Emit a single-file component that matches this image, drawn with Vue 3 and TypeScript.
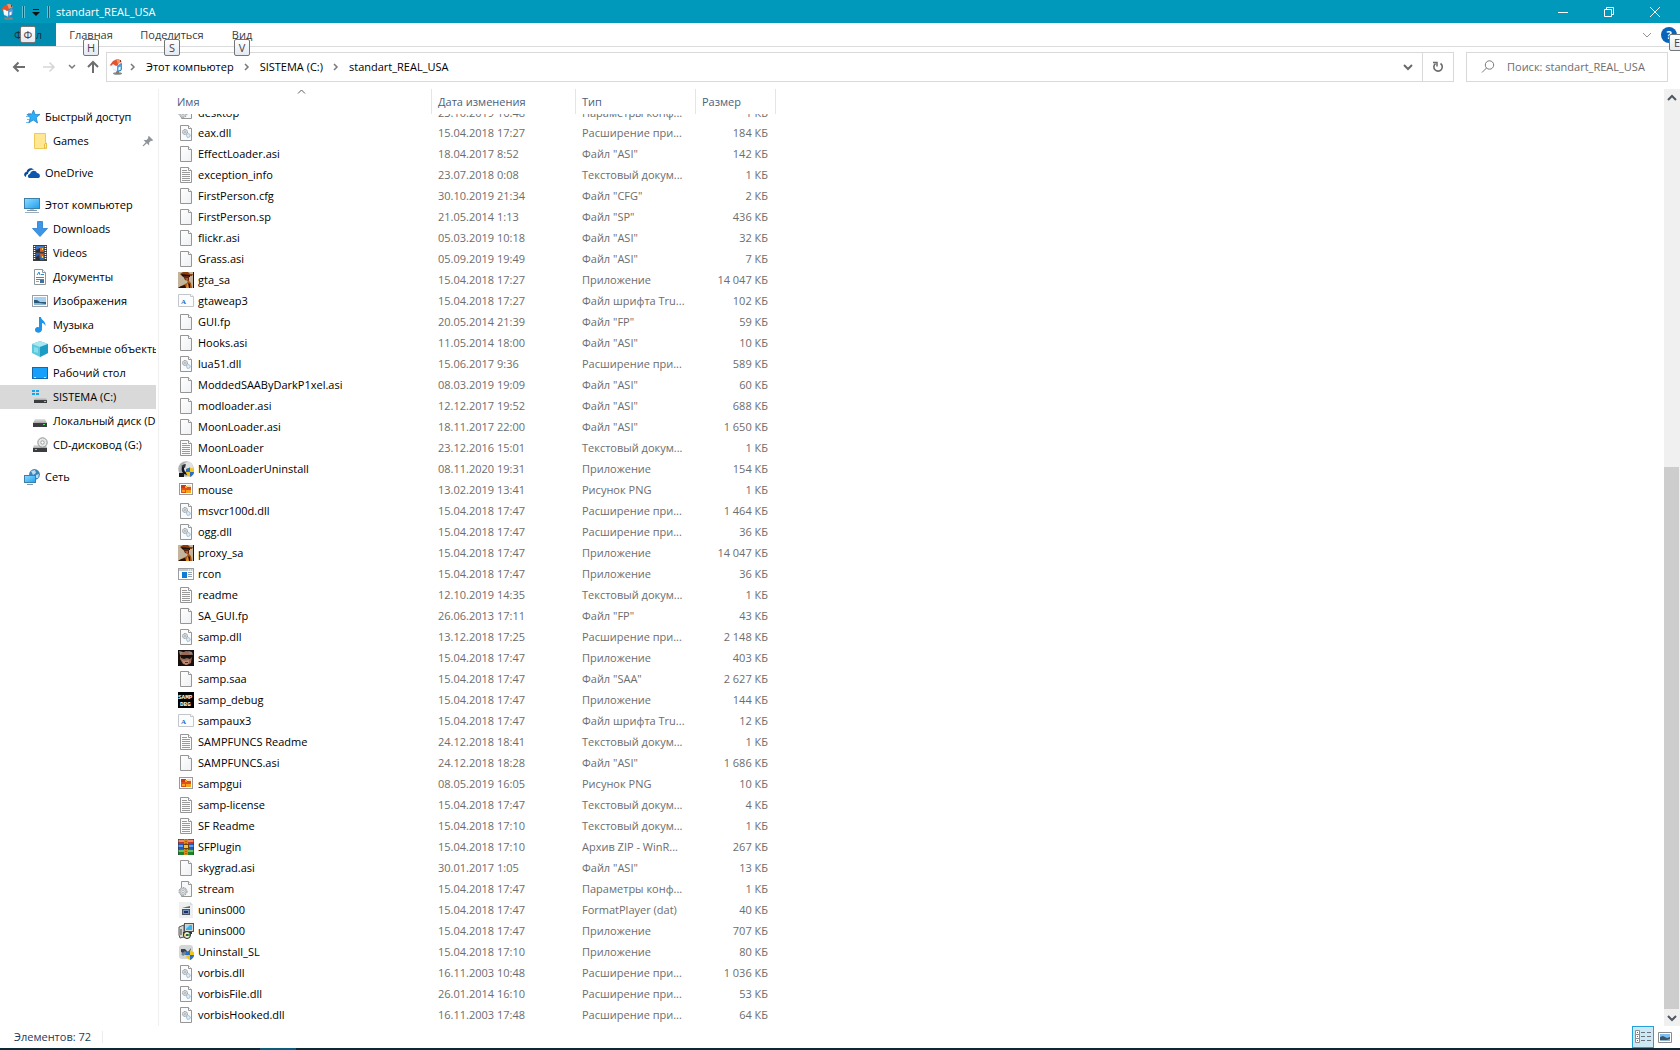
<script setup lang="ts">
interface FileRow {
  name: string
  icon: string
  date: string
  type: string
  size: string
}

interface NavItem {
  label: string
  icon: string
  root?: boolean
  pinned?: boolean
  current?: boolean
}

const DLL = 'Расширение при...'
const TXT = 'Текстовый докум...'
const APP = 'Приложение'
const FONT = 'Файл шрифта Tru...'

const raw: [string, string, string, string, string][] = [
  ['desktop', 'ini', '23.10.2019 16:48', 'Параметры конф...', '1'],
  ['eax.dll', 'dll', '15.04.2018 17:27', DLL, '184'],
  ['EffectLoader.asi', 'doc', '18.04.2017 8:52', 'Файл "ASI"', '142'],
  ['exception_info', 'txt', '23.07.2018 0:08', TXT, '1'],
  ['FirstPerson.cfg', 'doc', '30.10.2019 21:34', 'Файл "CFG"', '2'],
  ['FirstPerson.sp', 'doc', '21.05.2014 1:13', 'Файл "SP"', '436'],
  ['flickr.asi', 'doc', '05.03.2019 10:18', 'Файл "ASI"', '32'],
  ['Grass.asi', 'doc', '05.09.2019 19:49', 'Файл "ASI"', '7'],
  ['gta_sa', 'gta', '15.04.2018 17:27', APP, '14 047'],
  ['gtaweap3', 'font', '15.04.2018 17:27', FONT, '102'],
  ['GUI.fp', 'doc', '20.05.2014 21:39', 'Файл "FP"', '59'],
  ['Hooks.asi', 'doc', '11.05.2014 18:00', 'Файл "ASI"', '10'],
  ['lua51.dll', 'dll', '15.06.2017 9:36', DLL, '589'],
  ['ModdedSAAByDarkP1xel.asi', 'doc', '08.03.2019 19:09', 'Файл "ASI"', '60'],
  ['modloader.asi', 'doc', '12.12.2017 19:52', 'Файл "ASI"', '688'],
  ['MoonLoader.asi', 'doc', '18.11.2017 22:00', 'Файл "ASI"', '1 650'],
  ['MoonLoader', 'txt', '23.12.2016 15:01', TXT, '1'],
  ['MoonLoaderUninstall', 'moon', '08.11.2020 19:31', APP, '154'],
  ['mouse', 'png', '13.02.2019 13:41', 'Рисунок PNG', '1'],
  ['msvcr100d.dll', 'dll', '15.04.2018 17:47', DLL, '1 464'],
  ['ogg.dll', 'dll', '15.04.2018 17:47', DLL, '36'],
  ['proxy_sa', 'gta', '15.04.2018 17:47', APP, '14 047'],
  ['rcon', 'exe', '15.04.2018 17:47', APP, '36'],
  ['readme', 'txt', '12.10.2019 14:35', TXT, '1'],
  ['SA_GUI.fp', 'doc', '26.06.2013 17:11', 'Файл "FP"', '43'],
  ['samp.dll', 'dll', '13.12.2018 17:25', DLL, '2 148'],
  ['samp', 'samp', '15.04.2018 17:47', APP, '403'],
  ['samp.saa', 'doc', '15.04.2018 17:47', 'Файл "SAA"', '2 627'],
  ['samp_debug', 'debug', '15.04.2018 17:47', APP, '144'],
  ['sampaux3', 'font', '15.04.2018 17:47', FONT, '12'],
  ['SAMPFUNCS Readme', 'txt', '24.12.2018 18:41', TXT, '1'],
  ['SAMPFUNCS.asi', 'doc', '24.12.2018 18:28', 'Файл "ASI"', '1 686'],
  ['sampgui', 'png', '08.05.2019 16:05', 'Рисунок PNG', '10'],
  ['samp-license', 'txt', '15.04.2018 17:47', TXT, '4'],
  ['SF Readme', 'txt', '15.04.2018 17:10', TXT, '1'],
  ['SFPlugin', 'zip', '15.04.2018 17:10', 'Архив ZIP - WinR...', '267'],
  ['skygrad.asi', 'doc', '30.01.2017 1:05', 'Файл "ASI"', '13'],
  ['stream', 'ini', '15.04.2018 17:47', 'Параметры конф...', '1'],
  ['unins000', 'dat', '15.04.2018 17:47', 'FormatPlayer (dat)', '40'],
  ['unins000', 'setup', '15.04.2018 17:47', APP, '707'],
  ['Uninstall_SL', 'unsl', '15.04.2018 17:10', APP, '80'],
  ['vorbis.dll', 'dll', '16.11.2003 10:48', DLL, '1 036'],
  ['vorbisFile.dll', 'dll', '26.01.2014 16:10', DLL, '53'],
  ['vorbisHooked.dll', 'dll', '16.11.2003 17:48', DLL, '64'],
]

const files: FileRow[] = raw.map(([name, icon, date, type, size]) => ({
  name, icon, date, type, size: `${size} КБ`,
}))

const groups: NavItem[][] = [
  [
    { label: 'Быстрый доступ', icon: 'star', root: true },
    { label: 'Games', icon: 'folder', pinned: true },
  ],
  [{ label: 'OneDrive', icon: 'cloud', root: true }],
  [
    { label: 'Этот компьютер', icon: 'pc', root: true },
    { label: 'Downloads', icon: 'down' },
    { label: 'Videos', icon: 'video' },
    { label: 'Документы', icon: 'docs' },
    { label: 'Изображения', icon: 'pics' },
    { label: 'Музыка', icon: 'music' },
    { label: 'Объемные объекты', icon: 'cube' },
    { label: 'Рабочий стол', icon: 'desk' },
    { label: 'SISTEMA (C:)', icon: 'sysdrive', current: true },
    { label: 'Локальный диск (D:)', icon: 'drive' },
    { label: 'CD-дисковод (G:)', icon: 'cd' },
  ],
  [{ label: 'Сеть', icon: 'net', root: true }],
]

const tabs = [
  { label: 'Главная', key: 'H', cls: 'tab-home' },
  { label: 'Поделиться', key: 'S', cls: 'tab-share' },
  { label: 'Вид', key: 'V', cls: 'tab-view' },
]

const crumbs = ['Этот компьютер', 'SISTEMA (C:)', 'standart_REAL_USA']
</script>

<template>
  <div class="app">
    <svg class="paints" aria-hidden="true">
      <defs>
        <linearGradient id="g-page" x1="0" y1="0" x2="1" y2="1">
          <stop offset="0" stop-color="#ffffff" /><stop offset="1" stop-color="#eef0f2" />
        </linearGradient>
        <linearGradient id="g-screen" x1="0" y1="0" x2="1" y2="1">
          <stop offset="0" stop-color="#8fdcff" /><stop offset="1" stop-color="#1d9ff0" />
        </linearGradient>
        <linearGradient id="g-drive" x1="0" y1="0" x2="0" y2="1">
          <stop offset="0" stop-color="#e4e4e4" /><stop offset="1" stop-color="#a8a8a8" />
        </linearGradient>
      </defs>
    </svg>
    <svg class="defs" aria-hidden="true">
      <symbol id="i-house" viewBox="0 0 16 16">
        <ellipse cx="8.500" cy="14.500" rx="4.500" ry="1.300" fill="#7d8a90" />
        <rect x="7" y="11" width="3" height="4" fill="#8e7a64" />
        <path d="M3 5l6 2v6l-5-2z" fill="#d4ecfb" />
        <path d="M8 7l5-3v6l-1 2-4 1z" fill="#2f7fc4" />
        <path d="M8 7l4-3 1 3-1 4-4 1z" fill="#4f9edb" />
        <path d="M4 6l4 1v4l-4-1z" fill="#f4fbff" />
        <path d="M9.500 8.500l2-1v3l-2 1z" fill="#fff" />
        <path d="M1 6l3-4 4-2 2 3-1 3-2 1-3-2-2 2z" fill="#e2542a" />
        <path d="M7 0h3l3 3-4 2z" fill="#f5936a" />
        <rect x="11" y="1" width="1" height="2" fill="#8d3a20" />
      </symbol>
      <symbol id="i-doc" viewBox="0 0 16 16">
        <path d="M2.500.500h8l3 3v12h-11z" fill="url(#g-page)" stroke="#969696" />
        <path d="M10.500.500v3h3" fill="#fff" stroke="#969696" />
      </symbol>
      <symbol id="i-txt" viewBox="0 0 16 16">
        <path d="M2.500.500h8l3 3v12h-11z" fill="#fcfcfc" stroke="#969696" />
        <path d="M10.500.500v3h3" fill="#fff" stroke="#969696" />
        <path d="M4 3.500h5M4 5.500h8M4 7.500h8M4 9.500h8M4 11.500h8M4 13.500h8" stroke="#9a9a9a" />
      </symbol>
      <symbol id="i-dll" viewBox="0 0 16 16">
        <path d="M2.500.500h8l3 3v12h-11z" fill="#fafbfc" stroke="#969696" />
        <path d="M10.500.500v3h3" fill="#fff" stroke="#969696" />
        <circle cx="7" cy="7" r="2.500" fill="#e4e6e8" stroke="#858c92" stroke-dasharray="1.200 .5" />
        <circle cx="7" cy="7" r="1" fill="#fff" stroke="#858c92" stroke-width=".6" />
        <circle cx="10.300" cy="10.500" r="1.900" fill="#dcebf6" stroke="#7fa9c9" stroke-dasharray="1 .5" />
      </symbol>
      <symbol id="i-ini" viewBox="0 0 16 16">
        <path d="M3.500.500h7l3 3v12h-10z" fill="#f7f8f9" stroke="#969696" />
        <path d="M10.500.500v3h3" fill="#fff" stroke="#969696" />
        <circle cx="5" cy="10.500" r="4" fill="#e2e4e6" stroke="#8e9296" stroke-dasharray="1.600 1" />
        <circle cx="5" cy="10.500" r="3" fill="#e2e4e6" stroke="#9ea2a6" stroke-width=".7" />
        <circle cx="5" cy="10.500" r="1.200" fill="#fff" stroke="#8e9296" stroke-width=".6" />
      </symbol>
      <symbol id="i-gta" viewBox="0 0 16 16">
        <rect width="16" height="16" fill="#c4b49c" />
        <rect x="15" width="1" height="16" fill="#1a1210" />
        <path d="M5 0h5l2 2 3 0-1 2H4L2 2z" fill="#8d3d0c" />
        <path d="M3 2l9 1v2H5z" fill="#20100a" />
        <path d="M5 4h6v5l-4-1z" fill="#5a2412" />
        <path d="M7 6h3v2l-2 0z" fill="#b0562c" />
        <path d="M3 16l2-3 4-2 1-3 3 3 1 5z" fill="#a5530f" />
        <path d="M8 16l1-4 2-1 0 5z" fill="#e08a30" />
        <path d="M0 16l3-2 4-1 1 3zM10 11l2 1 0 4h-1z" fill="#2a0e08" />
      </symbol>
      <symbol id="i-font" viewBox="0 0 16 16">
        <path d="M.500 1.500h12l3 2v10H.500z" fill="#fbfcfd" stroke="#c3c7ca" />
        <path d="M12.500 1.500v2h3" fill="#fff" stroke="#c3c7ca" />
        <text x="3" y="11" font-size="7" font-weight="700" fill="#1a6bc0" font-family="Liberation Serif, serif">A</text>
      </symbol>
      <symbol id="i-shield" viewBox="0 0 16 16">
        <path d="M8 8l4-1.500L16 8v3c0 2.500-2 4-4 5-2-1-4-2.500-4-5z" fill="#f5c518" />
        <path d="M8 8l4-1.500V11H8zM12 11h4c0 2.500-2 4-4 5z" fill="#2b6fc4" />
      </symbol>
      <symbol id="i-moon" viewBox="0 0 16 16">
        <circle cx="8" cy="8" r="7.800" fill="#aeb2b3" />
        <circle cx="10" cy="6" r="5" fill="#e0e2e2" />
        <path d="M7 3C3 4 3 10 5 12H1l0 4h5v-3l3 1 1-2C6 12 5 7 7 3z" fill="#15181a" />
        <path d="M3 5l5-2-1 4z" fill="#33383b" />
        <use href="#i-shield" width="16" height="16" />
      </symbol>
      <symbol id="i-png" viewBox="0 0 16 16">
        <rect x="1.500" y="1.500" width="13" height="11" fill="#fff" stroke="#9a9a9a" />
        <path d="M3 3h5v1h5v7H3z" fill="#e0501e" />
        <path d="M3 3h5v3H3z" fill="#c83c14" />
        <path d="M7 4h2v2H7zM8 8h5v3H8zM4 8h3v2H4z" fill="#f6a21c" />
        <path d="M9 3h4v2H9z" fill="#f8d9b0" />
      </symbol>
      <symbol id="i-exe" viewBox="0 0 16 16">
        <rect x=".5" y="2.500" width="15" height="11" fill="#fff" stroke="#9a9fa4" />
        <path d="M1 3h14v2H1z" fill="#c3c8cc" />
        <path d="M10 4h1M12 4h1M14 4h1" stroke="#fff" />
        <rect x="4" y="6" width="5" height="6" fill="#0a7bd8" />
        <path d="M10 6.500h4M10 8.500h4M10 10.500h4" stroke="#8fa0b0" />
      </symbol>
      <symbol id="i-samp" viewBox="0 0 16 16">
        <rect width="16" height="16" fill="#15100e" />
        <path d="M2 2h4l2-1 5 1 1 4-1 7-4 2-4-1-3-5z" fill="#9a6a56" />
        <path d="M4 10l3 1 4-1 0 3-3 2-3-2z" fill="#c28a70" />
        <path d="M2 5h12v2l-2 2-3-1-3 1-3-1z" fill="#16100f" />
        <path d="M1 1l4 1-3 3zM10 1l4 1 1 3-3-1z" fill="#8e8a80" />
        <path d="M7 12h3v1H7z" fill="#5a2a24" />
      </symbol>
      <symbol id="i-debug" viewBox="0 0 16 16">
        <rect width="16" height="16" fill="#000" />
        <text x="0" y="7" font-size="6" font-weight="700" fill="#fffff0" font-family="Liberation Mono, monospace">SAMP</text>
        <text x="2" y="14" font-size="6" font-weight="700" fill="#fffff0" font-family="Liberation Mono, monospace">DBG</text>
      </symbol>
      <symbol id="i-zip" viewBox="0 0 16 16">
        <rect y="0" width="16" height="5" fill="#c4382c" /><rect y="1" width="16" height="2" fill="#ef8a6c" />
        <rect y="5" width="16" height="5" fill="#2358b8" /><rect y="6" width="16" height="2" fill="#5fa0ee" />
        <rect y="10" width="16" height="6" fill="#23802c" /><rect y="11" width="16" height="2" fill="#66c45a" />
        <rect x="6" width="4" height="16" fill="#d98a1e" /><path d="M8 0v16" stroke="#7a4208" stroke-dasharray="1 1" />
        <rect x="5.500" y="5.500" width="5" height="4" fill="#f0c050" stroke="#6e4208" />
        <path d="M0 0v16M16 0v16" stroke="#26303c" />
      </symbol>
      <symbol id="i-dat" viewBox="0 0 16 16">
        <path d="M1 0h11l3 3v13H1z" fill="#eef0f0" />
        <path d="M12 0v3h3" fill="#d4d8d8" />
        <path d="M4 7h8v6H4z" fill="#4a5560" />
        <path d="M4 6l8-2v2z" fill="#5c6770" />
        <rect x="5" y="8" width="6" height="4" fill="#6f93c0" />
        <rect x="6" y="9" width="4" height="2" fill="#1f2f66" />
      </symbol>
      <symbol id="i-setup" viewBox="0 0 16 16">
        <path d="M1 4l5-2v12l-4 1-1-3z" fill="#d8d8d4" stroke="#555" />
        <path d="M3 6v6" stroke="#444" />
        <rect x="6.500" y=".5" width="9" height="8" fill="#d6d6d0" stroke="#555" />
        <rect x="8" y="2" width="6" height="5" fill="#37b4ec" />
        <path d="M8 2h4L8 6z" fill="#8fdcff" />
        <path d="M5 9h9v2H5z" fill="#333" />
        <circle cx="9" cy="12" r="3.500" fill="#e8f2e0" stroke="#222" />
        <path d="M9 12l3-2v4z" fill="#3aa850" /><path d="M9 12l-3-1 1 3z" fill="#e8c83c" />
        <circle cx="9" cy="12" r="1" fill="#222" />
      </symbol>
      <symbol id="i-unsl" viewBox="0 0 16 16">
        <rect x="1" y="1" width="14" height="14" rx="3" fill="#d4d6d8" />
        <path d="M3 5h4l3 3 3-4-1 4-4 3-5-3z" fill="#33424c" />
        <path d="M3 10l4-3 2 2-4 3z" fill="#6e8492" />
        <use href="#i-shield" width="16" height="16" />
      </symbol>

      <symbol id="i-star" viewBox="0 0 16 16">
        <path d="M9.500 1l1.600 4.500 4.900-.1-3.800 3.200 1.300 5.400-4.300-3-4.500 3 1.500-5.200L3 5.500h4.500z" fill="#2bb0f5" stroke="#1579c8" stroke-width=".7" />
        <path d="M4 4.500h3M2 7.500h3M3 10.500h3M2 13.500h3" stroke="#4aa8e6" stroke-width=".8" />
      </symbol>
      <symbol id="i-folder" viewBox="0 0 16 16">
        <path d="M2.500.500h11v9l1 1v5h-12z" fill="#ffe794" stroke="#eec95a" />
        <path d="M12.500 15V11l2-1v5z" fill="#fff0b8" stroke="#e8bf45" />
      </symbol>
      <symbol id="i-cloud" viewBox="0 0 16 16">
        <path d="M2 12C-1 11 0 7 2.500 7 3 3 8 2 10 5c-3-1-6 2-6 4-2 0-2 2-2 3z" fill="#0a4a9c" />
        <path d="M5 13c-2-1-1-4 1-4 1-4 6-4 7-1 3 0 4 4 1.500 5z" fill="#0d57ac" />
      </symbol>
      <symbol id="i-pc" viewBox="0 0 16 16">
        <rect x=".5" y="1.500" width="15" height="10" fill="url(#g-screen)" stroke="#3c7fa8" />
        <path d="M6 12h4v1H6z" fill="#b0c4d0" />
        <path d="M3 13.500h10" stroke="#7f97a6" /><path d="M1 15.500h14" stroke="#9aaebb" />
      </symbol>
      <symbol id="i-down" viewBox="0 0 16 16">
        <path d="M5.500.500h5v7h5L8 15.500.500 7.500h5z" fill="#3c96e8" stroke="#2a7cc8" stroke-width=".8" />
      </symbol>
      <symbol id="i-video" viewBox="0 0 16 16">
        <rect x="1" width="14" height="16" fill="#3a3c40" />
        <path d="M2.500 1v14M13.500 1v14" stroke="#fff" stroke-width="1.500" stroke-dasharray="1 1" />
        <rect x="4" y="1" width="8" height="6" fill="#3c78c8" /><rect x="4" y="8" width="8" height="7" fill="#2d62aa" />
        <path d="M7 2l4 1v3H8zM8 9h3l1 4H9z" fill="#d8622c" />
        <path d="M4 5l4-2v4H4zM4 12l3-2 1 5H4z" fill="#2b3036" /><path d="M10 3h1v2h-1zM10 11h1v2h-1z" fill="#f6d048" />
      </symbol>
      <symbol id="i-docs" viewBox="0 0 16 16">
        <path d="M2.500.500h8l3 3v12h-11z" fill="#fff" stroke="#8f969c" /><path d="M10.500.500v3h3" fill="#fff" stroke="#8f969c" />
        <path d="M5 6l2-3 1 3M9 5.500h3M4 8.500h8M4 10.500h8" stroke="#2b8fd8" fill="none" />
        <path d="M4 12.500h3" stroke="#8aa" /><rect x="8" y="11" width="4" height="3" fill="#41719a" />
      </symbol>
      <symbol id="i-pics" viewBox="0 0 16 16">
        <rect x=".5" y="2.500" width="15" height="11" fill="#fff" stroke="#9aa0a5" />
        <rect x="2" y="4" width="12" height="8" fill="#a5d2f2" />
        <path d="M2 7l3 0 3 2 6 0v3H2z" fill="#2d5a74" /><path d="M2 10l6 0 6 1v1H2z" fill="#8bb7cf" />
      </symbol>
      <symbol id="i-music" viewBox="0 0 16 16">
        <path d="M7 0h2c0 3 5 4 4.500 9-1-2-2-3-3.500-3v6c0 5-7 4.500-7 1 0-3 3-3.500 4-2.500z" fill="#1c94ea" />
      </symbol>
      <symbol id="i-cube" viewBox="0 0 16 16">
        <path d="M0 3l8-3 8 3v9l-8 4-8-4z" fill="#5cc8dc" />
        <path d="M0 3l8-3 8 3-8 3z" fill="#a8e6f2" /><path d="M8 6l8-3v9l-8 4z" fill="#1c9cc4" />
        <path d="M2 6l4 1v5l-4-1z" fill="#8adcea" />
      </symbol>
      <symbol id="i-desk" viewBox="0 0 16 16">
        <rect x=".5" y="2.500" width="15" height="11" fill="#15a0fb" stroke="#1467a8" />
        <path d="M2 12.500h2M12 12.500h2" stroke="#bfe6ff" />
      </symbol>
      <symbol id="i-drive" viewBox="0 0 16 16">
        <path d="M3 6h10l2 4H1z" fill="url(#g-drive)" /><rect x="1" y="10" width="14" height="4" fill="#3b3d3f" />
        <rect x="11" y="11" width="2" height="1" fill="#5bea5b" />
      </symbol>
      <symbol id="i-sysdrive" viewBox="0 0 16 16">
        <path d="M0 1h3v2H0zM4 1h3v2H4zM0 4h3v2H0zM4 4h3v2H4z" fill="#16a4ee" />
        <path d="M3 8h10l2 3H2z" fill="url(#g-drive)" /><rect x="2" y="11" width="13" height="3" fill="#3b3d3f" />
        <rect x="12" y="12" width="2" height="1" fill="#5bea5b" />
      </symbol>
      <symbol id="i-cd" viewBox="0 0 16 16">
        <path d="M2 8h12l1 3H1z" fill="url(#g-drive)" /><rect x="1" y="11" width="14" height="4" fill="#3b3d3f" />
        <rect x="3" y="12" width="2" height="1" fill="#5bea5b" />
        <circle cx="10.500" cy="5.500" r="4.700" fill="#e6e8e8" stroke="#8e9294" /><circle cx="10.500" cy="5.500" r="1.700" fill="#fff" stroke="#9a9ea0" />
      </symbol>
      <symbol id="i-net" viewBox="0 0 16 16">
        <circle cx="10.500" cy="5.500" r="5.400" fill="#3e82b8" />
        <path d="M7 2l4-1 1 3-3 2zM12 6l3-1-1 4-2 0z" fill="#b8dcec" />
        <rect x=".5" y="6.500" width="11" height="7" fill="url(#g-screen)" stroke="#3c7fa8" />
        <path d="M3 15.500h6" stroke="#7f97a6" />
      </symbol>
      <symbol id="i-pin" viewBox="0 0 16 16">
        <path d="M9 1l6 6-2 1-1-.5-2.500 2.500 0 4-3-3L2 15l-1 0 0-1 4-4.500-3-3 4 0L8.500 4 8 3z" fill="#8e959a" />
      </symbol>
    </svg>

    <header class="titlebar">
      <svg class="ico app-ico"><use href="#i-house" /></svg>
      <span class="bar"></span>
      <button class="qat" aria-label="Настройка панели быстрого доступа">
        <svg width="8" height="8" viewBox="0 0 8 8"><path d="M1 1.500h6" stroke="#111" /><path d="M0 4h8L4 8z" fill="#111" /></svg>
      </button>
      <span class="bar"></span>
      <h1>standart_REAL_USA</h1>
      <button class="win" aria-label="Свернуть"><svg width="12" height="12"><path d="M1 6.500h10" stroke="#fff" /></svg></button>
      <button class="win" aria-label="Свернуть в окно"><svg width="12" height="12"><path d="M3.500 3.500v-2h7v7h-2M1.500 3.500h7v7h-7z" fill="none" stroke="#fff" /></svg></button>
      <button class="win" aria-label="Закрыть"><svg width="12" height="12"><path d="M1 1l10 10M11 1L1 11" stroke="#fff" /></svg></button>
    </header>

    <nav class="ribbon">
      <button class="tab tab-file">Файл<kbd class="tip tip-in">Ф</kbd></button>
      <button v-for="t in tabs" :key="t.key" class="tab" :class="t.cls">{{ t.label }}<kbd class="tip">{{ t.key }}</kbd></button>
      <button class="expand" aria-label="Развернуть ленту"><svg width="10" height="6"><path d="M1 1l4 4 4-4" fill="none" stroke="#8c949a" /></svg></button>
      <button class="help" aria-label="Справка"><span class="help-dot">?</span><kbd class="tip tip-help">E</kbd></button>
    </nav>

    <div class="navbar">
      <button class="nb back" aria-label="Назад"><svg width="14" height="12"><path d="M13 6H2M6.500 1.500L2 6l4.500 4.500" fill="none" stroke="#6e6e6e" stroke-width="2" /></svg></button>
      <button class="nb fwd" aria-label="Вперед"><svg width="14" height="12"><path d="M1 6h11M7.500 1.500L12 6l-4.500 4.500" fill="none" stroke="#d6d6d6" stroke-width="1.500" /></svg></button>
      <button class="nb recent" aria-label="Последние расположения"><svg width="8" height="6"><path d="M1 1l3 3 3-3" fill="none" stroke="#7a7a7a" stroke-width="1.500" /></svg></button>
      <button class="nb up" aria-label="Вверх"><svg width="14" height="14"><path d="M7 13V2M2 7l5-5 5 5" fill="none" stroke="#6e6e6e" stroke-width="2" /></svg></button>
      <div class="address">
        <svg class="ico"><use href="#i-house" /></svg>
        <template v-for="c in crumbs" :key="c">
          <svg class="sep" viewBox="0 0 26 8"><path d="M11 1l3 3-3 3" fill="none" stroke="#7a7a7a" stroke-width="1.500" /></svg>
          <a href="#" class="crumb">{{ c }}</a>
        </template>
        <button class="drop" aria-label="Предыдущие расположения"><svg width="10" height="8"><path d="M1 2l4 4 4-4" fill="none" stroke="#6a6a6a" stroke-width="2" /></svg></button>
        <button class="refresh" aria-label="Обновить"><svg width="12" height="12"><path d="M8.500 2.500A4.200 4.200 0 1 1 3.500 2.600" fill="none" stroke="#6a6a6a" stroke-width="1.600" /><path d="M1 1.500h4v4" fill="none" stroke="#6a6a6a" stroke-width="1.500" /></svg></button>
      </div>
      <label class="search">
        <svg width="14" height="14"><circle cx="8.500" cy="5" r="4.200" fill="none" stroke="#7a7a7a" /><path d="M5.500 8L1 12.500" stroke="#7a7a7a" /></svg>
        <input type="text" placeholder="Поиск: standart_REAL_USA" aria-label="Поиск" />
      </label>
    </div>

    <main class="body">
      <aside class="side">
        <ul v-for="(g, i) in groups" :key="i">
          <li v-for="n in g" :key="n.label">
            <a href="#" class="node" :class="{ root: n.root, current: n.current }">
              <svg class="ico"><use :href="'#i-' + n.icon" /></svg>
              <span>{{ n.label }}</span>
              <svg v-if="n.pinned" class="pin"><use href="#i-pin" /></svg>
            </a>
          </li>
        </ul>
      </aside>

      <section class="list">
        <table>
          <colgroup><col class="c-name" /><col class="c-date" /><col class="c-type" /><col class="c-size" /></colgroup>
          <thead>
            <tr>
              <th>Имя<svg class="sort" width="9" height="5"><path d="M1 4.500l3.500-3.500L8 4.500" fill="none" stroke="#5a5a5a" /></svg></th>
              <th>Дата изменения</th>
              <th>Тип</th>
              <th>Размер</th>
            </tr>
          </thead>
          <tbody>
            <tr v-for="(f, i) in files" :key="i">
              <td class="name"><div class="cell"><svg class="ico"><use :href="'#i-' + f.icon" /></svg><span>{{ f.name }}</span></div></td>
              <td><div class="cell">{{ f.date }}</div></td>
              <td><div class="cell">{{ f.type }}</div></td>
              <td><div class="cell size">{{ f.size }}</div></td>
            </tr>
          </tbody>
        </table>
      </section>

      <div class="scroll">
        <button aria-label="Прокрутить вверх"><svg width="10" height="8"><path d="M1 6l4-4 4 4" fill="none" stroke="#505860" stroke-width="2" /></svg></button>
        <div class="track"><div class="thumb"></div></div>
        <button aria-label="Прокрутить вниз"><svg width="10" height="8"><path d="M1 2l4 4 4-4" fill="none" stroke="#505860" stroke-width="2" /></svg></button>
      </div>
    </main>

    <footer class="status">
      <span class="count">Элементов: 72</span>
      <button class="view on" aria-label="Таблица">
        <svg width="16" height="14"><path d="M.5.500h4v4h-4zM.5 4.500h4v4h-4zM.5 8.500h4v4h-4z" fill="#fff" stroke="#8c8c8c" /><path d="M2 2.500h1M2 10.500h1" stroke="#c0402c" /><path d="M2 6.500h1" stroke="#3c78c8" /><path d="M6 2.500h4M12 2.500h4M6 6.500h4M12 6.500h4M6 10.500h4M12 10.500h4" stroke="#6a737a" /></svg>
      </button>
      <button class="view" aria-label="Крупные значки">
        <svg width="14" height="11"><path d="M.5.500h13v10H.5z" fill="#fff" stroke="#8c8c8c" /><path d="M2 2h10v7H2z" fill="#7cc0f5" /><path d="M2 5l3-1 4 2 3-1v4H2z" fill="#3d5566" /><path d="M2 8h7l3-1v2H2z" fill="#8ab4cc" /></svg>
      </button>
    </footer>
    <div class="taskbar"><span></span></div>
  </div>
</template>

<style>
body { margin: 0; background: #fff; }
</style>

<style scoped>
* { box-sizing: border-box; }
.app {
  display: flex; flex-direction: column; min-height: 100vh; overflow: clip;
  font-family: "Open Sans", "Noto Sans", sans-serif; font-size: 11px; line-height: 16px; color: #000; background: #fff;
}
button { border: 0; padding: 0; margin: 0; background: none; font: inherit; color: inherit; display: flex; align-items: center; justify-content: center; }
a { color: inherit; text-decoration: none; }
svg { display: block; flex: none; }
.paints { position: absolute; width: 0; height: 0; }
.defs { display: none; }
.ico { width: 16px; height: 16px; }

.titlebar { display: flex; align-items: center; height: 23px; background: #0099bc; color: #fff; padding-right: 2px; }
.bar { width: 3px; height: 12px; background: #1d5c6b; border: 1px solid #62bfd4; border-width: 0 1px; }
.app-ico { margin-right: 6px; }
.qat { width: 22px; height: 23px; }
.titlebar h1 { flex: 1; margin: 0 0 0 6px; font-size: 11px; font-weight: 400; }
.win { width: 46px; height: 23px; }

.ribbon { display: flex; height: 24px; border-bottom: 1px solid #dadbdc; color: #3b3b3b; }
.tab { position: relative; height: 23px; }
.tab-file { width: 56px; background: #008cb0; color: #16303a; }
.tab-home { width: 70px; }
.tab-share { width: 92px; }
.tab-view { width: 48px; }
.tip {
  position: absolute; left: 50%; top: 16px; width: 16px; height: 17px; margin-left: -8px;
  border: 1px solid #767676; border-radius: 2px; background: linear-gradient(#fff, #e4e9f2);
  color: #4c4048; font: inherit; line-height: 15px; text-align: center;
}
.tip-in { top: 3px; }
.expand { width: 24px; margin-left: auto; }
.help { position: relative; width: 20px; margin-right: 1px; z-index: 1; }
.help-dot { width: 16px; height: 16px; border-radius: 50%; background: #0a63b8; color: #fff; font-weight: 700; line-height: 16px; }
.tip-help { top: 11px; margin-left: 0; }

.navbar { display: flex; align-items: center; height: 42px; padding: 0 12px 2px 4px; }
.nb { height: 30px; }
.back, .fwd { width: 30px; }
.recent { width: 16px; }
.up { width: 26px; padding-right: 1px; }
.address { flex: 1; display: flex; align-items: center; height: 30px; border: 1px solid #d9d9d9; padding-left: 2px; }
.sep { width: 26px; height: 8px; }
.address .ico + .sep { margin-left: -5px; }
.drop { width: 28px; height: 28px; margin-left: auto; }
.refresh { width: 31px; height: 28px; border-left: 1px solid #d9d9d9; }
.search { display: flex; align-items: center; width: 202px; height: 30px; margin-left: 12px; border: 1px solid #d9d9d9; padding-left: 14px; }
.search input { flex: 1; min-width: 0; border: 0; outline: 0; padding: 0 0 0 12px; background: none; font: inherit; }
.search input::placeholder { color: #6d6d6d; opacity: 1; }

.body { flex: 1; display: flex; }
.side { width: 159px; border-right: 1px solid #f0f0f0; padding: 16px 2px 0 0; }
ul { list-style: none; margin: 0 0 8px; padding: 0; }
.node { display: flex; align-items: center; gap: 5px; height: 24px; padding-left: 32px; white-space: nowrap; overflow: hidden; }
.node.root { padding-left: 24px; }
.node.current { background: #d9d9d9; }
.pin { width: 12px; height: 12px; margin-left: auto; margin-right: 2px; }

.list { flex: 1; padding-left: 12px; min-width: 0; }
table { width: 605px; table-layout: fixed; border-collapse: collapse; }
.c-name { width: 261px; }
.c-date { width: 144px; }
.c-type { width: 120px; }
.c-size { width: 80px; }
th { position: relative; height: 25px; padding: 0 6px; text-align: left; font-weight: 400; color: #4c607a; background: linear-gradient(#e5e5e5, #e5e5e5) right / 1px 100% no-repeat; }
.sort { position: absolute; top: 0; left: 50%; margin-left: -5px; }
td { padding: 0 8px 0 6px; color: #6d6d6d; }
td.name { padding-left: 7px; color: #000; }
.cell { display: flex; align-items: center; height: 21px; gap: 4px; white-space: nowrap; }
.size { justify-content: flex-end; }
tbody tr:first-child .cell { height: 8px; line-height: 18px; align-items: flex-end; overflow: hidden; }
tbody tr:first-child .ico { margin-bottom: 3px; }

.scroll { width: 16px; display: flex; flex-direction: column; background: #f0f0f0; }
.scroll button { height: 17px; }
.track { flex: 1; display: flex; flex-direction: column; justify-content: flex-end; }
.thumb { height: 60%; margin-right: 1px; background: #cdcdcd; }

.status { display: flex; align-items: center; height: 22px; padding: 0 4px 0 14px; color: #1e395b; }
.count { width: 89px; margin-right: auto; border-right: 1px solid #ededed; line-height: 12px; white-space: nowrap; }
.view { width: 22px; height: 22px; }
.view.on { background: #cce8f5; border: 1px solid #26a0da; }
.taskbar { height: 2px; background: #0b2a35; display: flex; }
.taskbar span { width: 36px; margin-left: 260px; background: #0b5c78; }
</style>
